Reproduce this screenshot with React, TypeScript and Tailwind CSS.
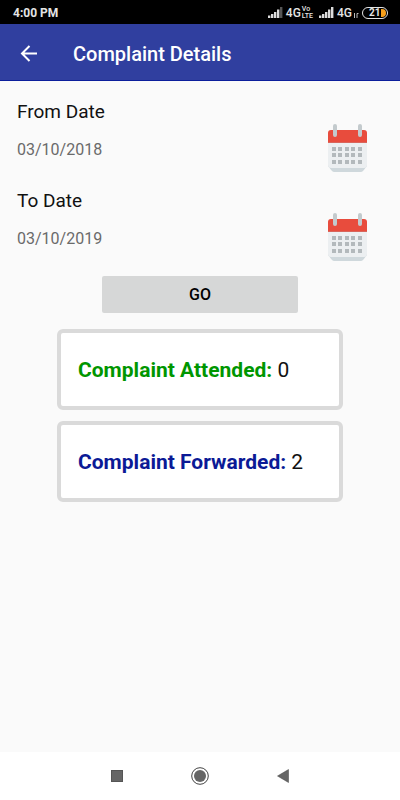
import { useState } from "react";

const results = [
  { label: "Complaint Attended:", count: 0, color: "text-[#009600]" },
  { label: "Complaint Forwarded:", count: 2, color: "text-[#0b1a96]" },
];

function Signal({ weak }: { weak?: boolean }) {
  return (
    <svg className="h-[11px] w-[15px]" viewBox="0 0 15 11" fill="#dcdcdc">
      <rect x="0" y="8.500" width="2.400" height="2.500" />
      <rect x="3" y="7" width="2.400" height="4" />
      <rect x="6" y="5" width="2.400" height="6" />
      <rect x="9" y="2.500" width="2.400" height="8.500" />
      <rect x="12" y="0" width="2.400" height="11" fill={weak ? "#555" : "#dcdcdc"} />
    </svg>
  );
}

function StatusBar() {
  return (
    <div className="flex h-6 items-center bg-black pt-px pr-3 pl-[13px] text-[#e4e4e4]">
      <span className="flex-1 text-xs font-bold">4:00 PM</span>
      <Signal weak />
      <span className="ml-[3px] text-xs font-medium">4G</span>
      <span className="ml-px flex flex-col text-[7px] leading-[7px] font-medium">
        <span>Vo</span>
        <span>LTE</span>
      </span>
      <span className="ml-[6px] flex">
        <Signal />
      </span>
      <span className="ml-[3px] text-xs font-medium">4G</span>
      <svg className="mt-1 ml-px h-[6px] w-[6px]" viewBox="0 0 6 6" fill="none" stroke="#bdbdbd">
        <path d="M1.5 1v5M4 6V1.5M4 1.5h1.5" />
      </svg>
      <span className="ml-[3px] flex h-3 w-[26px] rounded-full border border-[#e4e4e4] p-px">
        <span className="flex-1 pl-[5px] text-[10px] leading-[8px] font-bold">21</span>
        <span className="w-[5px] rounded-r-full bg-[#f9a01b]" />
      </span>
    </div>
  );
}

function CalendarIcon() {
  const cols = [5, 11, 18, 24, 31];
  const rows = [23, 29, 36];

  return (
    <svg className="h-12 w-[41px]" viewBox="0 0 41 48">
      <path d="M1 40h39v2l-4 5q-1 1-2 1H7q-1 0-2-1l-4-5z" fill="#cfd8dc" />
      <path d="M1 18h39v23q0 3-3 3H4q-3 0-3-3z" fill="#eceff1" />
      <path d="M1 19V9q0-3 3-3h33q3 0 3 3v10z" fill="#e84c3d" />
      <path d="M1 18h39v1H1z" fill="#d8665c" />
      <g fill="#c3cacd">
        <rect x="6" y="0" width="4" height="13" rx="2" />
        <rect x="31" y="0" width="4" height="13" rx="2" />
      </g>
      <g fill="#b3b9bc">
        {rows.map((y) =>
          cols.map((x) => <rect key={`${x}-${y}`} x={x} y={y} width="4" height="4" />)
        )}
      </g>
    </svg>
  );
}

type DateFieldProps = {
  id: string;
  label: string;
  value: string;
  onChange: (value: string) => void;
};

function DateField({ id, label, value, onChange }: DateFieldProps) {
  return (
    <div className="flex items-end gap-4 pr-8 pl-[17px]">
      <div className="flex min-w-0 flex-1 flex-col gap-[14px] pb-[10px]">
        <label htmlFor={id} className="text-[19px] leading-6 text-[#111]">
          {label}
        </label>
        <input
          id={id}
          className="w-full bg-transparent text-base leading-6 text-[#6a6a6a] outline-none"
          value={value}
          onChange={(e) => onChange(e.target.value)}
        />
      </div>
      <button aria-label={`Pick ${label}`}>
        <CalendarIcon />
      </button>
    </div>
  );
}

export default function App() {
  const [from, setFrom] = useState("03/10/2018");
  const [to, setTo] = useState("03/10/2019");

  return (
    <div className="flex min-h-screen flex-col bg-[#fafafa] font-['Roboto',sans-serif]">
      <StatusBar />
      <header className="flex h-[57px] items-center gap-9 border-b border-[#0c1f9c] bg-[#303f9f] pt-[2px] pl-5 text-white">
        <button aria-label="Back">
          <svg className="h-[17px] w-[17px]" viewBox="0 0 17 17" fill="none" stroke="#fff" strokeWidth="2">
            <path d="M17 8.5H2M9.500 1L2 8.500l7.500 7.500" />
          </svg>
        </button>
        <h1 className="pt-px text-xl font-medium">Complaint Details</h1>
      </header>

      <main className="flex flex-1 flex-col pt-[19px]">
        <div className="flex flex-col gap-[17px]">
          <DateField id="from" label="From Date" value={from} onChange={setFrom} />
          <DateField id="to" label="To Date" value={to} onChange={setTo} />
        </div>

        <button className="mx-auto mt-[15px] h-[37px] w-[49%] rounded-xs bg-[#d6d7d7] text-base font-medium text-black">
          GO
        </button>

        <div className="mt-4 flex flex-col gap-[11px] px-[57px]">
          {results.map((item) => (
            <div
              key={item.label}
              className="rounded-md border-4 border-[#dadada] bg-white px-[17px] pt-6 pb-[22px] text-[21px] leading-[27px] text-[#111]"
            >
              <span className={`font-bold ${item.color}`}>{item.label}</span> {item.count}
            </div>
          ))}
        </div>
      </main>

      <nav className="flex h-12 items-center justify-center gap-[68px] bg-white">
        <button aria-label="Recent apps">
          <svg className="h-3 w-3" viewBox="0 0 12 12">
            <rect x="0.500" y="0.500" width="11" height="11" fill="#666" stroke="#555" />
          </svg>
        </button>
        <button aria-label="Home">
          <svg className="h-[18px] w-[18px]" viewBox="0 0 18 18">
            <circle cx="9" cy="9" r="8.300" fill="none" stroke="#444" />
            <circle cx="9" cy="9" r="6" fill="#666" />
          </svg>
        </button>
        <button aria-label="Previous">
          <svg className="h-[14px] w-3" viewBox="0 0 12 14">
            <path d="M11.500 0.500v13L0.500 7z" fill="#666" stroke="#444" strokeWidth="0.500" />
          </svg>
        </button>
      </nav>
    </div>
  );
}
